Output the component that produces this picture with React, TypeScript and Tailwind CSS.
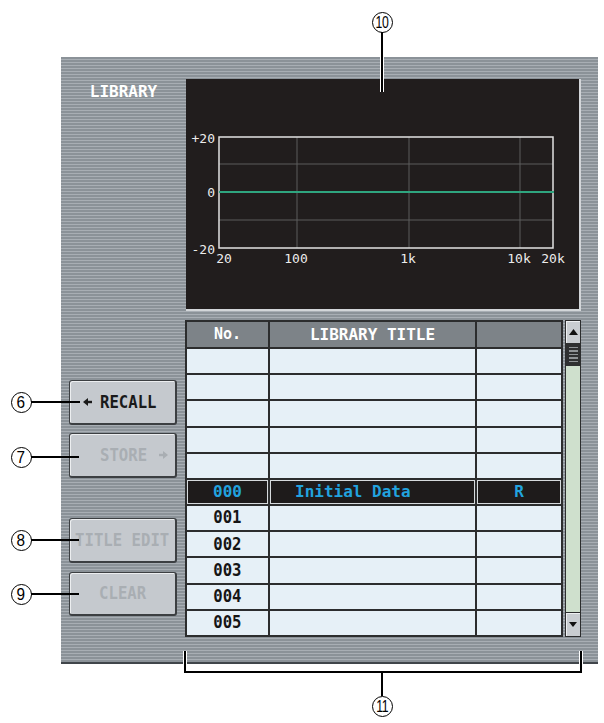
import React from "react";

const MONO = "font-['DejaVu_Sans_Mono','Liberation_Mono',monospace]";
const SANS = "font-['Liberation_Sans','Arial',sans-serif]";

function Circ({ n, x, y }: { n: string; x: number; y: number }) {
  return (
    <div
      className={`absolute w-[21px] h-[21px] rounded-full border-[1.5px] border-black bg-white flex items-center justify-center ${SANS} text-[17px] leading-none text-black`}
      style={{ left: x - 10.5, top: y - 10.5 }}
    >
      <span className={n.length > 1 ? "inline-block scale-x-[0.72] tracking-[-0.5px]" : "inline-block scale-x-[0.9]"}>{n}</span>
    </div>
  );
}

function LeftArrow() {
  return (
    <svg width="9" height="8" viewBox="0 0 9 8" className="shrink-0">
      <polygon points="0,4 5,0 5,8" fill="currentColor" />
      <rect x="4" y="2.8" width="5" height="2.4" fill="currentColor" />
    </svg>
  );
}
function RightArrow() {
  return (
    <svg width="9" height="8" viewBox="0 0 9 8" className="shrink-0">
      <polygon points="9,4 4,0 4,8" fill="currentColor" />
      <rect x="0" y="2.8" width="5" height="2.4" fill="currentColor" />
    </svg>
  );
}

function Btn({ children, className = "", disabled = false }: { children: React.ReactNode; className?: string; disabled?: boolean }) {
  return (
    <div
      className={`ml-[8px] w-[108px] rounded-[3px] bg-[#c5c9ce] border border-[#3c3f42] border-r-2 border-b-2 shadow-[inset_1px_1px_0_#eceef0] flex items-center overflow-hidden ${MONO} font-bold text-[17px] leading-none whitespace-nowrap ${
        disabled ? "text-[#a9aeb3]" : "text-[#1a1a1a]"
      } ${className}`}
    >
      {children}
    </div>
  );
}

function Graph() {
  const x0 = 33, x1 = 367, y0 = 58, y1 = 169;
  return (
    <svg width="393" height="230" viewBox="0 0 393 230" className="block">
      {[111, 223, 334].map((x) => (
        <line key={x} x1={x} y1={y0} x2={x} y2={y1} stroke="#5c5c5c" strokeWidth="1" />
      ))}
      {[85, 141].map((y) => (
        <line key={y} x1={x0} y1={y} x2={x1} y2={y} stroke="#5c5c5c" strokeWidth="1" />
      ))}
      <rect x={x0} y={y0} width={x1 - x0} height={y1 - y0} fill="none" stroke="#e2e2e2" strokeWidth="1.5" />
      <line x1={x0} y1={113} x2={x1 + 1} y2={113} stroke="#2fa57f" strokeWidth="2" />
      <g fill="#ececec" fontFamily="'DejaVu Sans Mono', monospace" fontSize="13">
        <text x="29" y="64" textAnchor="end">+20</text>
        <text x="29" y="118" textAnchor="end">0</text>
        <text x="29" y="175" textAnchor="end">-20</text>
        <text x="38" y="184" textAnchor="middle">20</text>
        <text x="110" y="184" textAnchor="middle">100</text>
        <text x="222" y="184" textAnchor="middle">1k</text>
        <text x="333" y="184" textAnchor="middle">10k</text>
        <text x="367" y="184" textAnchor="middle">20k</text>
      </g>
    </svg>
  );
}

const rows = ["", "", "", "", "", "000", "001", "002", "003", "004", "005"];

function Table() {
  return (
    <div className="grid grid-cols-[81px_205px_84px] grid-rows-[25px_repeat(11,minmax(0,1fr))] gap-[2px] p-[2px] bg-[#2c2d2e] w-[378px] h-[317px]">
      <div className={`bg-[#7d8388] flex items-center justify-center text-white ${MONO} font-bold text-[15px]`}>No.</div>
      <div className={`bg-[#7d8388] flex items-center justify-center text-white ${MONO} font-bold text-[16px]`}>LIBRARY TITLE</div>
      <div className="bg-[#7d8388]" />
      {rows.map((r, i) =>
        r === "000" ? (
          <React.Fragment key={i}>
            <div className={`bg-[#1e1b1b] shadow-[inset_0_0_0_1px_#d6dadd] flex items-center justify-center text-[#22a3df] ${MONO} font-bold text-[16px]`}>000</div>
            <div className={`bg-[#1e1b1b] shadow-[inset_0_0_0_1px_#d6dadd] flex items-center pl-[25px] text-[#22a3df] ${MONO} font-bold text-[16px] whitespace-pre`}>Initial Data</div>
            <div className={`bg-[#1e1b1b] shadow-[inset_0_0_0_1px_#d6dadd] flex items-center justify-center text-[#22a3df] ${MONO} font-bold text-[16px]`}>R</div>
          </React.Fragment>
        ) : (
          <React.Fragment key={i}>
            <div className={`bg-[#e6f0f7] flex items-center justify-center text-[#151515] ${MONO} font-bold text-[17px]`}>
              <span className="inline-block scale-x-[0.92]">{r}</span>
            </div>
            <div className="bg-[#e6f0f7]" />
            <div className="bg-[#e6f0f7]" />
          </React.Fragment>
        )
      )}
    </div>
  );
}

function Scrollbar() {
  return (
    <div className="ml-[2px] w-[16px] h-[317px] bg-[#2c2d2e] p-[1px] flex flex-col">
      <div className="h-[22px] bg-[#c9cdd1] shadow-[inset_1px_1px_0_#eef0f2] flex items-center justify-center">
        <svg width="9" height="6" viewBox="0 0 9 6"><polygon points="0,6 4.5,0 9,6" fill="#111" /></svg>
      </div>
      <div className="h-[23px] bg-[#2f3031] flex flex-col items-center justify-center gap-[2px]">
        {[0, 1, 2, 3, 4].map((k) => (
          <div key={k} className="w-[9px] h-[1.5px] bg-[#8f9396]" />
        ))}
      </div>
      <div className="flex-1 bg-[#cfe0cd]" />
      <div className="h-[23px] mt-[1px] bg-[#c9cdd1] shadow-[inset_1px_1px_0_#eef0f2] flex items-center justify-center">
        <svg width="8" height="5" viewBox="0 0 8 5"><polygon points="0,0 8,0 4,5" fill="#111" /></svg>
      </div>
    </div>
  );
}

export default function App() {
  return (
    <div className="relative w-[604px] h-[723px] bg-white overflow-hidden">
      <div className="ml-[61px] mt-[57px] w-[537px] h-[607px] border-b-2 border-[#40454a] bg-[image:repeating-linear-gradient(180deg,#8b9298_0px,#8b9298_2px,#a8aeb4_2px,#a8aeb4_3px)] flex pt-[22px]">
        <div className="w-[125px] flex flex-col">
          <div className={`mt-[3px] leading-[19px] text-center text-white ${MONO} font-bold text-[16px]`}>LIBRARY</div>
          <Btn className="mt-[279px] h-[45px] pl-[13px] gap-[8px]">
            <LeftArrow />
            <span className="inline-block scale-x-[0.92] origin-left">RECALL</span>
          </Btn>
          <Btn disabled className="mt-[8px] h-[45px] pl-[30px] gap-[8px]">
            <span className="inline-block scale-x-[0.92] origin-left">STORE</span>
            <RightArrow />
          </Btn>
          <Btn disabled className="mt-[40px] h-[45px] justify-center">
            <span className="inline-block scale-x-[0.92]">TITLE EDIT</span>
          </Btn>
          <Btn disabled className="mt-[9px] h-[44px] justify-center">
            <span className="inline-block scale-x-[0.92]">CLEAR</span>
          </Btn>
        </div>
        <div className="w-[395px] flex flex-col">
          <div className="h-[232px] bg-[#211d1d] border-r-2 border-b-2 border-[#d3d6d9]">
            <Graph />
          </div>
          <div className="mt-[9px] flex -ml-[1px]">
            <Table />
            <Scrollbar />
          </div>
        </div>
      </div>

      {/* callouts */}
      <Circ n="10" x={382} y={22} />
      <div className="absolute left-[380px] top-[57px] w-[4px] h-[35px] bg-white" />
      <div className="absolute left-[381px] top-[32px] w-[2px] h-[60px] bg-black" />

      {[
        { n: "6", y: 402, end: 80 },
        { n: "7", y: 457, end: 79 },
        { n: "8", y: 540, end: 79 },
        { n: "9", y: 594, end: 79 },
      ].map((c) => (
        <React.Fragment key={c.n}>
          <Circ n={c.n} x={21} y={c.y} />
          <div className="absolute h-[2px] bg-black" style={{ left: 31, top: c.y - 1, width: c.end - 31 }} />
        </React.Fragment>
      ))}

      <div className="absolute left-[183px] top-[651px] w-[4px] h-[14px] bg-white" />
      <div className="absolute left-[579px] top-[651px] w-[4px] h-[14px] bg-white" />
      <div className="absolute left-[184px] top-[651px] w-[2px] h-[22px] bg-black" />
      <div className="absolute left-[580px] top-[651px] w-[2px] h-[22px] bg-black" />
      <div className="absolute left-[184px] top-[671px] w-[398px] h-[2px] bg-black" />
      <div className="absolute left-[381px] top-[673px] w-[2px] h-[23px] bg-black" />
      <Circ n="11" x={382} y={706} />
    </div>
  );
}
